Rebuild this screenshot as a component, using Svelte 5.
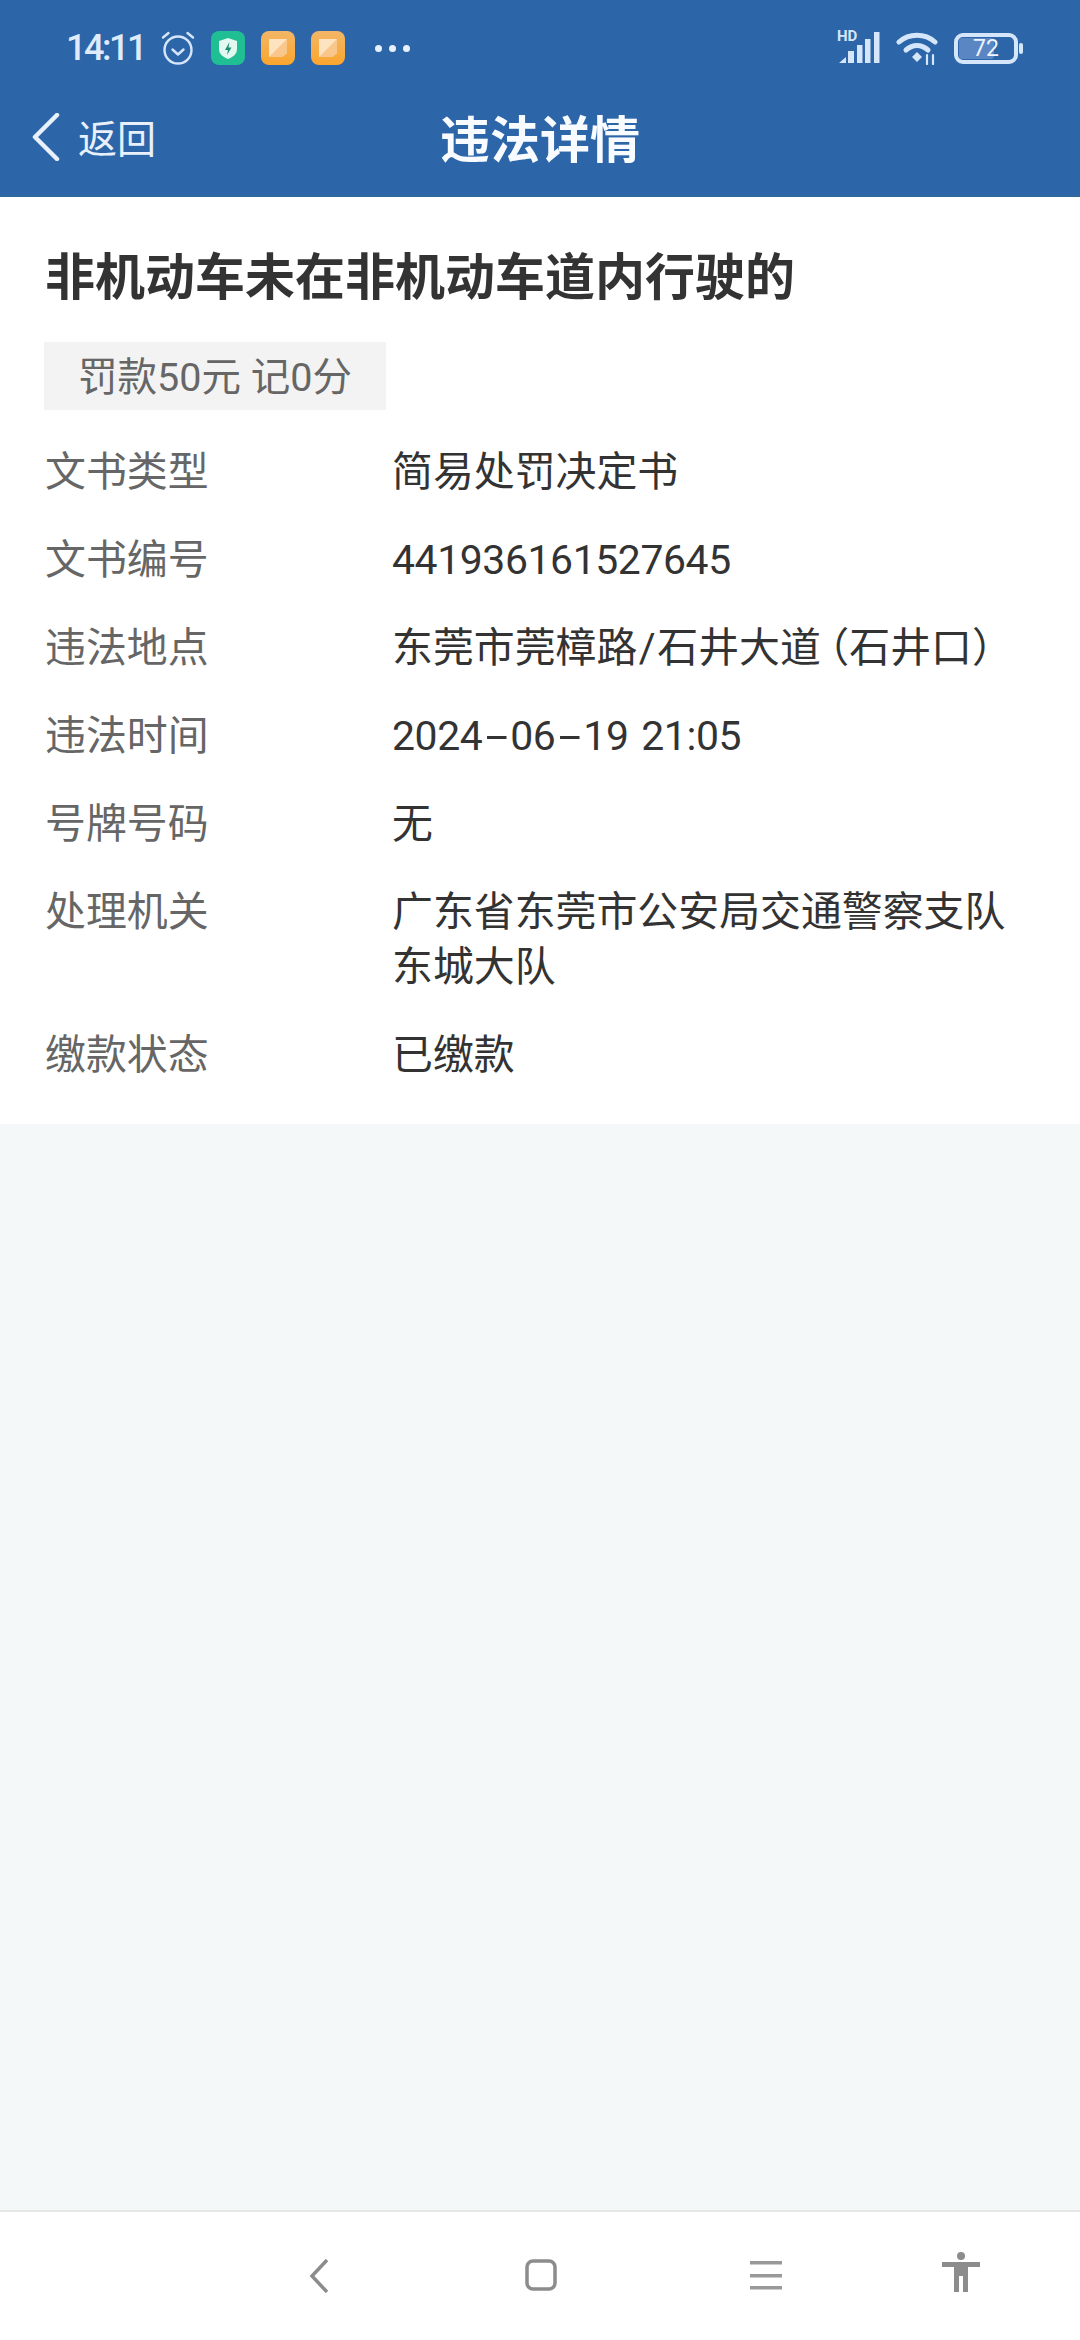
<script>
  const rows = [
    { label: '文书类型', value: '简易处罚决定书' },
    { label: '文书编号', value: '441936161527645', num: true },
    { label: '违法地点', value: '东莞市莞樟路/石井大道（石井口）' },
    { label: '违法时间', value: '2024-06-19 21:05', num: true },
    { label: '号牌号码', value: '无' },
    { label: '处理机关', value: '广东省东莞市公安局交通警察支队东城大队' },
    { label: '缴款状态', value: '已缴款' }
  ];

  // separators get their own span so they can be spaced apart from the text
  const sepClass = { '-': 'dash', '/': 'slash', '（': 'paren' };
  const tokens = (value) => value.split(/([-/（])/).filter(Boolean);
</script>

<div class="page">
  <header class="top">
    <div class="status">
      <span class="clock">14:11</span>
      <svg class="alarm" width="36" height="36" viewBox="0 0 36 36" fill="none" stroke="#d6e6fa" stroke-width="2.4" stroke-linecap="round" stroke-linejoin="round">
        <circle cx="18" cy="20" r="13.5" />
        <path d="M12.5 19.5l5.500 5 5.500-5" />
        <path d="M3 7.500L8.500 3M33 7.500L27.500 3" />
      </svg>
      <svg class="app" width="34" height="34" viewBox="0 0 34 34">
        <rect width="34" height="34" rx="8" fill="#1fbf93" />
        <path d="M17 7l9 3v8c0 5-4 8-9 10-5-2-9-5-9-10v-8z" fill="#e4f8f2" />
        <path d="M18.500 11l-4.500 8h3l-1 5 4.500-7.500h-3z" fill="#1b8c70" />
      </svg>
      {#each [0, 1] as n}
        <svg class="app" width="34" height="34" viewBox="0 0 34 34">
          <defs>
            <linearGradient id="note{n}" x1="0" y1="0" x2="0" y2="1">
              <stop offset="0" stop-color="#f2b667" />
              <stop offset="1" stop-color="#fba52d" />
            </linearGradient>
          </defs>
          <rect width="34" height="34" rx="8" fill="url(#note{n})" />
          <path d="M8 8h18v14l-5 4H8z" fill="#fde3c0" />
          <path d="M8 26L26 8v14l-5 4z" fill="#f9c78c" />
        </svg>
      {/each}
      <span class="dots"><i></i><i></i><i></i></span>
      <span class="spacer"></span>
      <div class="signal">
        <span class="hd">HD</span>
        <svg width="42" height="32" viewBox="0 0 42 32" fill="#d6e6fa">
          <path d="M1 31l7-6v6z" />
          <rect x="10" y="19" width="6" height="12" />
          <rect x="19" y="13" width="5.500" height="18" />
          <rect x="27" y="7" width="5.500" height="24" />
          <rect x="36" y="0" width="5.500" height="31" />
        </svg>
      </div>
      <svg class="wifi" width="42" height="34" viewBox="0 0 42 34" fill="none" stroke="#d6e6fa" stroke-width="5" stroke-linecap="round">
        <path d="M3 11C13 2 29 2 39 11" />
        <path d="M10 19c7-6 15-6 22 0" />
        <path d="M21 21l5 5-5 5-5-5z" fill="#d6e6fa" stroke="none" />
        <path d="M31 33v-9M37 33v-9" stroke-width="2.200" />
      </svg>
      <div class="battery">
        <span class="level"></span>
        <span class="pct">72</span>
      </div>
      <span class="nub"></span>
    </div>
    <nav class="bar">
      <svg class="back" width="28" height="48" viewBox="0 0 28 48" fill="none" stroke="#e8f1fb" stroke-width="4.500" stroke-linecap="round" stroke-linejoin="round">
        <path d="M25 2L3 24l22 22" />
      </svg>
      <span class="back-text">返回</span>
      <h1>违法详情</h1>
    </nav>
  </header>

  <section class="card">
    <h2>非机动车未在非机动车道内行驶的</h2>
    <div class="tag">罚款50元 记0分</div>
    <dl>
      {#each rows as row}
        <dt>{row.label}</dt>
        <dd class:num={row.num}>{#each tokens(row.value) as t}{#if sepClass[t]}<span class={sepClass[t]}>{t}</span>{:else}{t}{/if}{/each}</dd>
      {/each}
    </dl>
  </section>

  <div class="fill"></div>

  <footer class="sysnav">
    <svg class="nav-back" width="20" height="34" viewBox="0 0 20 34" fill="none" stroke="#8c8c8c" stroke-width="3.500">
      <path d="M18 1L3 17l15 16" />
    </svg>
    <svg class="nav-home" width="32" height="32" viewBox="0 0 32 32" fill="none" stroke="#8c8c8c" stroke-width="3.500">
      <rect x="2" y="2" width="28" height="28" rx="6" />
    </svg>
    <svg class="nav-menu" width="32" height="30" viewBox="0 0 32 30" fill="#999">
      <rect y="0" width="32" height="3.500" />
      <rect y="13" width="32" height="3.500" />
      <rect y="25" width="32" height="3.500" />
    </svg>
    <svg class="nav-person" width="38" height="40" viewBox="0 0 38 40" fill="#8c8c8c">
      <ellipse cx="19" cy="4" rx="4" ry="4" />
      <path d="M0 10h38v5H26v25h-5V24h-4v16h-5V15H0z" />
    </svg>
  </footer>
</div>

<style>
  :global(body) {
    margin: 0;
    font-family: Roboto, "Noto Sans CJK SC", sans-serif;
  }

  .page {
    display: flex;
    flex-direction: column;
    width: 1080px;
    height: 2340px;
    background: #f5f8f9;
  }

  .top {
    background: #2c65a8;
    height: 197px;
    box-sizing: border-box;
    padding-top: 30px;
    border-bottom: 2px solid #2f6a9f;
  }

  .status {
    display: flex;
    align-items: center;
    height: 36px;
    padding-left: 66px;
    color: #e2eefb;
  }

  .clock {
    font-size: 36px;
    font-weight: 500;
    letter-spacing: -2.500px;
    width: 94px;
    color: #dfebfa;
  }

  .app {
    margin-left: 15px;
  }

  .app + .app {
    margin-left: 16px;
  }

  .dots {
    display: flex;
    gap: 7px;
    margin-left: 30px;
  }

  .dots i {
    width: 7px;
    height: 7px;
    border-radius: 50%;
    background: #e8f1fb;
  }

  .spacer {
    flex: 1;
  }

  .signal {
    position: relative;
    width: 42px;
    height: 32px;
  }

  .hd {
    position: absolute;
    left: -1px;
    top: -3px;
    font-size: 15px;
    font-weight: 700;
    line-height: 15px;
    color: #d6e6fa;
  }

  .wifi {
    margin-left: 16px;
  }

  .battery {
    position: relative;
    box-sizing: border-box;
    width: 64px;
    height: 31px;
    margin-left: 16px;
    border: 4px solid #d6e6fa;
    border-radius: 9px;
    overflow: hidden;
  }

  .level {
    position: absolute;
    left: 1px;
    top: 1px;
    bottom: 1px;
    width: 35px;
    border-radius: 3px;
    background: #5b86c4;
  }

  .pct {
    position: absolute;
    inset: 0;
    text-align: center;
    font-size: 23px;
    line-height: 23px;
    color: #eef4fc;
  }

  .nub {
    width: 4px;
    height: 11px;
    margin: 0 57px 0 1px;
    border-radius: 2px;
    background: #d6e6fa;
  }

  .bar {
    position: relative;
    display: flex;
    align-items: center;
    height: 60px;
    margin-top: 40px;
    padding-left: 32px;
  }

  .back {
    margin-top: 2px;
  }

  .back-text {
    margin-left: 18px;
    font-size: 39px;
    color: #e8f1fb;
  }

  h1 {
    position: absolute;
    left: 0;
    right: 0;
    margin: 0;
    text-align: center;
    font-size: 50px;
    font-weight: 700;
    color: #f8fbff;
  }

  .card {
    background: #fff;
    height: 927px;
    box-sizing: border-box;
    padding: 51px 45px 0;
  }

  h2 {
    margin: 0;
    font-size: 50px;
    line-height: 60px;
    font-weight: 700;
    color: #333;
  }

  .tag {
    width: fit-content;
    margin: 34px 0 0 -1px;
    padding: 0 34px;
    height: 68px;
    line-height: 71px;
    font-size: 39.500px;
    color: #666;
    background: #f3f3f3;
  }

  dl {
    display: grid;
    grid-template-columns: 347px 1fr;
    row-gap: 33px;
    margin: 35px 0 0;
    font-size: 40.900px;
    line-height: 55px;
  }

  dt {
    color: #666;
  }

  dd {
    margin: 0;
    color: #333;
  }

  .num {
    letter-spacing: -0.400px;
    word-spacing: 3px;
  }

  .dash {
    display: inline-block;
    margin: 0 8.500px;
    transform: scaleX(2);
  }

  .slash {
    margin: 0 1.500px;
  }

  /* half-width bracket, with its own gap after the previous character */
  .paren {
    font-feature-settings: "halt";
    margin-left: 8px;
  }

  .fill {
    flex: 1;
  }

  .sysnav {
    position: relative;
    height: 130px;
    box-sizing: border-box;
    border-top: 2px solid #e6e6e6;
    background: #fff;
  }

  .sysnav svg {
    position: absolute;
  }

  .nav-back {
    left: 309px;
    top: 47px;
  }

  .nav-home {
    left: 525px;
    top: 47px;
  }

  .nav-menu {
    left: 750px;
    top: 49px;
  }

  .nav-person {
    left: 942px;
    top: 40px;
  }
</style>
